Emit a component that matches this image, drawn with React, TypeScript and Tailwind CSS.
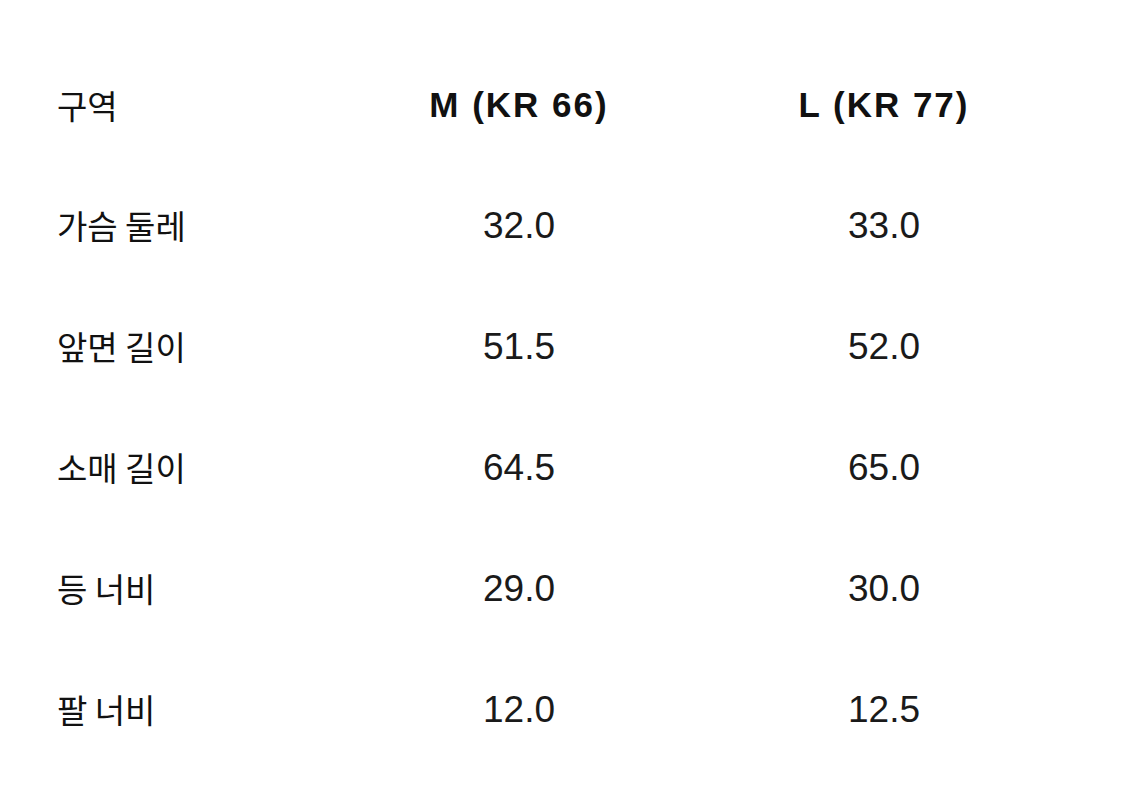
const rows: [string, string, string][] = [
    ["가슴 둘레", "32.0", "33.0"],
    ["앞면 길이", "51.5", "52.0"],
    ["소매 길이", "64.5", "65.0"],
    ["등 너비", "29.0", "30.0"],
    ["팔 너비", "12.0", "12.5"],
];

const korean = "font-['Noto_Sans_CJK_KR',sans-serif]";
const latin = "font-['Liberation_Sans','Noto_Sans_CJK_KR',sans-serif]";

export default function App() {
    return (
        <div className="w-[1125px] h-[804px] bg-white text-[#111] pt-[46px] pl-[57px]">
            <div className="grid grid-cols-[280px_364px_366px]">
                <div className={`h-[119px] flex items-center text-[33px] ${korean}`}>구역</div>
                <div className={`h-[119px] flex items-center justify-center text-[35px] font-bold tracking-[2px] ${latin}`}>
                    M (KR 66)
                </div>
                <div className={`h-[119px] flex items-center justify-center text-[35px] font-bold tracking-[2px] ${latin}`}>
                    L (KR 77)
                </div>

                {rows.map(([label, m, l]) => (
                    <div key={label} className="contents">
                        <div className={`h-[121px] flex items-center text-[33px] ${korean}`}>{label}</div>
                        <div className={`h-[121px] flex items-center justify-center text-[37px] text-[#1a1a1a] ${latin}`}>{m}</div>
                        <div className={`h-[121px] flex items-center justify-center text-[37px] text-[#1a1a1a] ${latin}`}>{l}</div>
                    </div>
                ))}
            </div>
        </div>
    );
}
